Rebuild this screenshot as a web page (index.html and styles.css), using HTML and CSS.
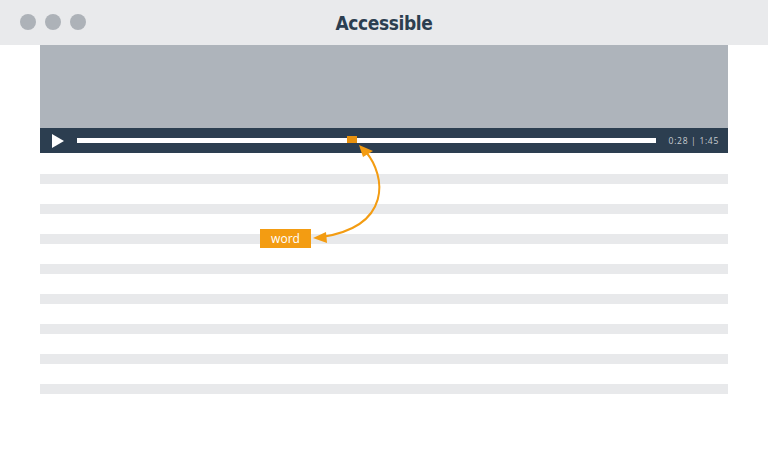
FILE: index.html
```html
<!DOCTYPE html>
<html>
<head>
<meta charset="utf-8">
<link rel="stylesheet" href="styles.css">
</head>
<body>
<div class="window">
  <header class="titlebar">
    <div class="dots"><span class="dot"></span><span class="dot"></span><span class="dot"></span></div>
    <h1 class="title">Accessible</h1>
  </header>
  <main class="content">
    <section class="player">
      <div class="screen"></div>
      <div class="controls">
        <svg class="play" width="12" height="14" viewBox="0 0 12 14"><polygon points="0,0 12,7 0,14" fill="#fff"/></svg>
        <div class="track"><span class="marker"></span></div>
        <span class="time">0:28 | 1:45</span>
      </div>
    </section>
    <section class="transcript">
      <div class="line"></div>
      <div class="line"></div>
      <div class="line"></div>
      <div class="line"></div>
      <div class="line"></div>
      <div class="line"></div>
      <div class="line"></div>
      <div class="line"></div>
    </section>
    <span class="word">word</span>
    <svg class="arrow" width="768" height="450" viewBox="0 0 768 450">
      <path d="M366 152 C 386 176, 392 226, 322 237" fill="none" stroke="#f39c12" stroke-width="2"/>
      <polygon points="359,145 373,151 363,157" fill="#f39c12"/>
      <polygon points="313,238 326,232 327,243" fill="#f39c12"/>
    </svg>
  </main>
</div>
</body>
</html>
```
FILE: styles.css
```css
html, body {
  margin: 0;
  padding: 0;
  background: #ffffff;
  width: 768px;
  height: 450px;
  overflow: hidden;
}
.window {
  position: relative;
  width: 768px;
  height: 450px;
}
.titlebar {
  height: 45px;
  background: #e9eaec;
  display: flex;
  align-items: center;
  justify-content: center;
  position: relative;
}
.dots {
  position: absolute;
  left: 20px;
  top: 14px;
  display: flex;
  gap: 9px;
}
.dot {
  width: 16px;
  height: 16px;
  border-radius: 50%;
  background: #adb2b8;
}
.title {
  margin: 0;
  font-family: "DejaVu Sans Condensed", "DejaVu Sans", sans-serif;
  font-weight: bold;
  font-size: 19px;
  color: #2c3e50;
  letter-spacing: -0.4px;
}
.content {
  margin: 0 40px;
}
.screen {
  height: 83px;
  background: #aeb4bb;
}
.controls {
  height: 25px;
  background: #2c3e50;
  display: flex;
  align-items: center;
  padding: 0 9px 0 12px;
}
.play {
  display: block;
  margin-right: 13px;
}
.track {
  position: relative;
  flex: 1;
  height: 5px;
  background: #ffffff;
  margin-right: 13px;
}
.marker {
  position: absolute;
  left: 270px;
  top: -2px;
  width: 10px;
  height: 7px;
  background: #e8920e;
}
.time {
  font-family: "Open Sans", sans-serif;
  font-size: 8.5px;
  letter-spacing: 0.7px;
  color: #c8ccd1;
}
.transcript {
  display: flex;
  flex-direction: column;
  gap: 20px;
  padding-top: 21px;
}
.line {
  height: 10px;
  background: #e8e9eb;
}
.word {
  position: absolute;
  left: 260px;
  top: 229px;
  width: 51px;
  height: 19px;
  background: #f39c12;
  color: #ffffff;
  font-family: "Open Sans", sans-serif;
  font-size: 12px;
  line-height: 19px;
  text-align: center;
}
.arrow {
  position: absolute;
  left: 0;
  top: 0;
  pointer-events: none;
}
```
